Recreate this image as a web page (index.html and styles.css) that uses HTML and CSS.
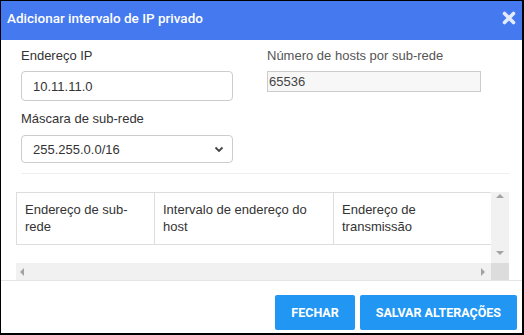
FILE: index.html
```html
<!DOCTYPE html>
<html lang="pt-BR">
<head>
    <meta charset="UTF-8">
    <title>Adicionar intervalo de IP privado</title>
    <link rel="stylesheet" href="styles.css">
</head>
<body>
    <div class="dialog">
        <div class="dialog-header">
            <span class="dialog-title">Adicionar intervalo de IP privado</span>
            <span class="close-btn">
                <svg width="14" height="14" viewBox="0 0 14 14">
                    <path d="M2.5 2.5 L11.5 11.5 M11.5 2.5 L2.5 11.5" stroke="#e4ebfc" stroke-width="3.6" stroke-linecap="round"/>
                </svg>
            </span>
        </div>

        <div class="dialog-body">
            <div class="form-grid">
                <div class="col">
                    <label class="field-label">Endereço IP</label>
                    <div class="text-input">10.11.11.0</div>
                    <label class="field-label label-second">Máscara de sub-rede</label>
                    <div class="select-input">
                        <span>255.255.0.0/16</span>
                        <svg width="10" height="7" viewBox="0 0 10 7">
                            <path d="M1.5 1.5 L5 5 L8.5 1.5" fill="none" stroke="#444" stroke-width="1.8"/>
                        </svg>
                    </div>
                </div>
                <div class="col">
                    <label class="field-label label-muted">Número de hosts por sub-rede</label>
                    <div class="readonly-input">65536</div>
                </div>
            </div>

            <div class="separator"></div>

            <div class="scroll-box">
                <div class="table-area">
                    <table class="subnet-table">
                        <colgroup>
                            <col class="c1">
                            <col class="c2">
                            <col class="c3">
                        </colgroup>
                        <tr>
                            <th>Endereço de sub-rede</th>
                            <th>Intervalo de endereço do host</th>
                            <th>Endereço de transmissão</th>
                        </tr>
                    </table>
                </div>
                <div class="vbar">
                    <span class="arrow arrow-up"></span>
                    <span class="arrow arrow-down"></span>
                </div>
                <div class="hbar">
                    <span class="arrow arrow-left"></span>
                    <span class="arrow arrow-right"></span>
                </div>
                <div class="corner"></div>
            </div>
        </div>

        <div class="dialog-footer">
            <button class="btn">Fechar</button>
            <button class="btn">Salvar alterações</button>
        </div>
    </div>
</body>
</html>
```

FILE: styles.css
```css
body {
    margin: 0;
    font-family: "Liberation Sans", Arial, sans-serif;
    background: #fff;
}

.dialog {
    width: 524px;
    height: 335px;
    box-sizing: border-box;
    border: 1px solid #000;
    border-right-width: 2px;
    border-bottom-width: 2px;
    background: #fff;
    display: flex;
    flex-direction: column;
}

.dialog-header {
    height: 39px;
    background: #4479ef;
    display: flex;
    align-items: center;
    justify-content: space-between;
    padding: 0 6px 0 6px;
}

.dialog-title {
    color: #fff;
    font-family: Roboto, "Liberation Sans", sans-serif;
    font-weight: 500;
    font-size: 13.5px;
    margin-top: -6px;
}

.close-btn {
    display: flex;
    margin-top: -6px;
}

.dialog-body {
    flex: 1;
    padding: 0 13px 0 15px;
}

.form-grid {
    display: grid;
    grid-template-columns: 212px 214px;
    column-gap: 34px;
    padding: 7px 0 0 5px;
}

.field-label {
    display: block;
    font-size: 13px;
    color: #333;
    line-height: 17px;
    margin-bottom: 7px;
}

.label-muted {
    color: #555;
}

.label-second {
    margin-top: 9px;
    margin-bottom: 8px;
}

.text-input {
    height: 30px;
    box-sizing: border-box;
    border: 1px solid #ccc;
    border-radius: 4px;
    padding: 0 11px;
    display: flex;
    align-items: center;
    font-size: 13px;
    color: #333;
}

.select-input {
    height: 28px;
    box-sizing: border-box;
    border: 1px solid #ccc;
    border-radius: 4px;
    padding: 0 8px 0 11px;
    display: flex;
    align-items: center;
    justify-content: space-between;
    font-size: 13px;
    color: #333;
}

.readonly-input {
    height: 21px;
    box-sizing: border-box;
    border: 1px solid #ccc;
    background: #f7f7f7;
    padding: 0 1px;
    display: flex;
    align-items: center;
    font-size: 13px;
    color: #444;
}

.separator {
    height: 1px;
    background: #eee;
    margin: 10px 0 0 5px;
}

.scroll-box {
    display: grid;
    grid-template-columns: 475px 18px;
    grid-template-rows: 71px 17px;
    margin-top: 18px;
}

.table-area {
    overflow: hidden;
}

.subnet-table {
    border-collapse: collapse;
    width: 475px;
    table-layout: fixed;
}

.subnet-table .c1 { width: 138px; }
.subnet-table .c2 { width: 179px; }
.subnet-table .c3 { width: 158px; }

.subnet-table th {
    border: 1px solid #ddd;
    text-align: left;
    font-weight: normal;
    font-size: 13px;
    line-height: 17px;
    color: #333;
    padding: 8px 8px 9px 8px;
    vertical-align: top;
}

.vbar,
.hbar {
    background: #f1f1f1;
    position: relative;
}

.corner {
    background: #dcdcdc;
}

.arrow {
    position: absolute;
    width: 0;
    height: 0;
    border: 4px solid transparent;
}

.arrow-up {
    left: 5px;
    top: 2px;
    border-bottom-color: #a3a3a3;
    border-top-width: 0;
}

.arrow-down {
    left: 5px;
    bottom: 8px;
    border-top-color: #a3a3a3;
    border-bottom-width: 0;
}

.arrow-left {
    left: 4px;
    top: 5px;
    border-right-color: #a3a3a3;
    border-left-width: 0;
}

.arrow-right {
    right: 6px;
    top: 5px;
    border-left-color: #a3a3a3;
    border-right-width: 0;
}

.dialog-footer {
    border-top: 1px solid #e5e5e5;
    padding: 14px 5px 0 0;
    height: 53px;
    box-sizing: border-box;
    display: flex;
    justify-content: flex-end;
    align-items: flex-start;
    gap: 5px;
}

.btn {
    height: 35px;
    background: #2196f3;
    color: #fff;
    border: none;
    border-radius: 2px;
    font-family: Roboto, "Liberation Sans", sans-serif;
    font-weight: 700;
    font-size: 12.5px;
    text-transform: uppercase;
    padding: 0 16px;
    cursor: pointer;
}
```
